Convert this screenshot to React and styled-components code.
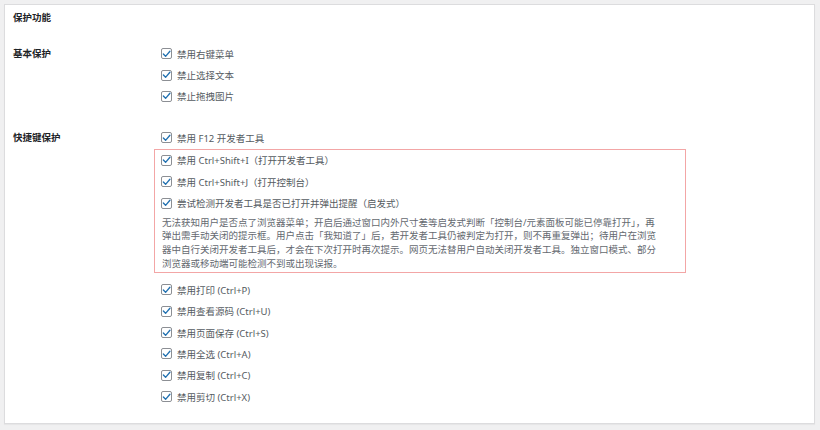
import React from 'react';
import styled, { createGlobalStyle } from 'styled-components';

const GlobalStyle = createGlobalStyle`
  html, body {
    margin: 0;
    padding: 0;
    background: #f0f0f1;
  }
  body {
    font-family: "Noto Sans", "Noto Sans CJK SC", sans-serif;
    font-size: 9.5px;
    color: #1d2327;
  }
`

const Page = styled.div`
  padding: 4px 5px 6px 4px;
  height: 430px;
  box-sizing: border-box;
`

const Card = styled.section`
  height: 100%;
  box-sizing: border-box;
  background: #fff;
  border: 1px solid #dcdcde;
  box-shadow: 0 1px 1px rgba(0, 0, 0, 0.04);
  padding: 6px 8px 0 8px;
`

const Title = styled.h2`
  margin: 0 0 19px 0;
  font-size: 9.5px;
  line-height: 13px;
  font-weight: 700;
  color: #1d2327;
`

const Section = styled.div`
  display: grid;
  grid-template-columns: 148px 1fr;
  align-items: start;
  margin-bottom: ${p => p.gap || 0}px;
`

const Heading = styled.div`
  font-weight: 700;
  line-height: 21.4px;
  color: #1d2327;
`

const Options = styled.div`
  display: flex;
  flex-direction: column;
`

const Row = styled.label`
  display: flex;
  align-items: center;
  height: 21.4px;
  color: #555b61;
  white-space: nowrap;
`

const Box = styled.span`
  width: 11px;
  height: 11px;
  flex: none;
  box-sizing: border-box;
  border: 1px solid #8c8f94;
  border-radius: 2px;
  background: #fff;
  margin-right: 5px;
  display: flex;
  align-items: center;
  justify-content: center;
  svg {
    display: block;
  }
`

const Highlight = styled.div`
  width: 532px;
  box-sizing: border-box;
  margin: 0 0 6px -7px;
  padding: 0 0 2px 6px;
  border: 1px solid #f3a6a6;
`

const Note = styled.p`
  margin: 2px 0 0 1px;
  font-size: 9.5px;
  line-height: 13.6px;
  color: #646970;
  white-space: nowrap;
`

const Check = ({ children }) => (
  <Row>
    <Box>
      <svg width="10" height="10" viewBox="0 0 10 10">
        <path d="M1.5 5.1 L4 7.6 L8.8 2" fill="none" stroke="#2271b1" strokeWidth="1.5" strokeLinecap="round" strokeLinejoin="round" />
      </svg>
    </Box>
    {children}
  </Row>
);

const App = () => (
  <>
    <GlobalStyle />
    <Page>
      <Card>
        <Title>保护功能</Title>
        <Section gap={20}>
          <Heading>基本保护</Heading>
          <Options>
            <Check>禁用右键菜单</Check>
            <Check>禁止选择文本</Check>
            <Check>禁止拖拽图片</Check>
          </Options>
        </Section>
        <Section>
          <Heading>快捷键保护</Heading>
          <Options>
            <Check>禁用 F12 开发者工具</Check>
            <Highlight>
              <Check>禁用 Ctrl+Shift+I（打开开发者工具）</Check>
              <Check>禁用 Ctrl+Shift+J（打开控制台）</Check>
              <Check>尝试检测开发者工具是否已打开并弹出提醒（启发式）</Check>
              <Note>
                无法获知用户是否点了浏览器菜单；开启后通过窗口内外尺寸差等启发式判断「控制台/元素面板可能已停靠打开」，再<br />
                弹出需手动关闭的提示框。用户点击「我知道了」后，若开发者工具仍被判定为打开，则不再重复弹出；待用户在浏览<br />
                器中自行关闭开发者工具后，才会在下次打开时再次提示。网页无法替用户自动关闭开发者工具。独立窗口模式、部分<br />
                浏览器或移动端可能检测不到或出现误报。
              </Note>
            </Highlight>
            <Check>禁用打印 (Ctrl+P)</Check>
            <Check>禁用查看源码 (Ctrl+U)</Check>
            <Check>禁用页面保存 (Ctrl+S)</Check>
            <Check>禁用全选 (Ctrl+A)</Check>
            <Check>禁用复制 (Ctrl+C)</Check>
            <Check>禁用剪切 (Ctrl+X)</Check>
          </Options>
        </Section>
      </Card>
    </Page>
  </>
);

export default App;
